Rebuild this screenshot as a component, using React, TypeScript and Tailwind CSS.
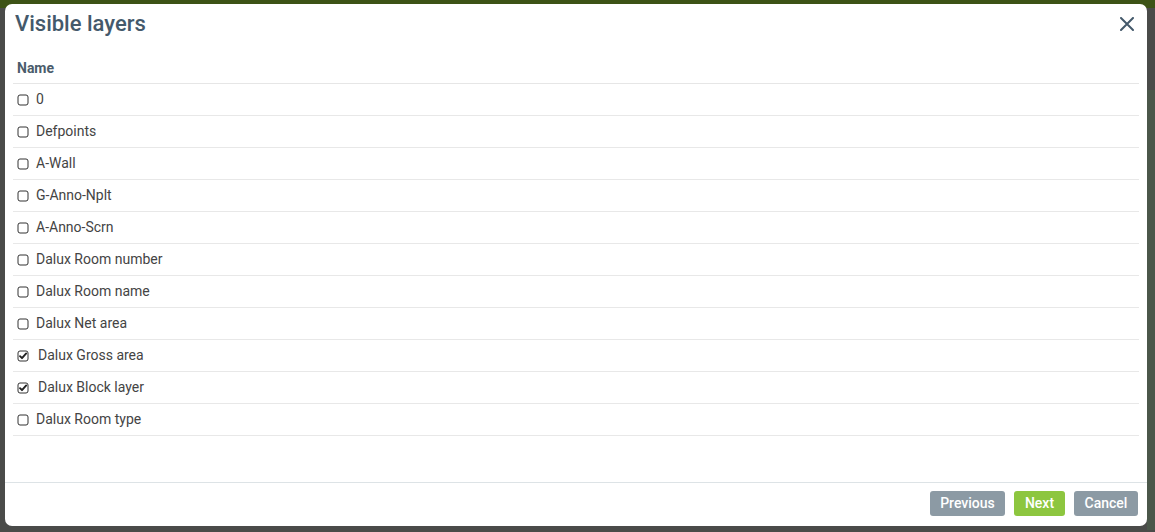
import React from "react";

const layers = [
  { name: "0", checked: false },
  { name: "Defpoints", checked: false },
  { name: "A-Wall", checked: false },
  { name: "G-Anno-Nplt", checked: false },
  { name: "A-Anno-Scrn", checked: false },
  { name: "Dalux Room number", checked: false },
  { name: "Dalux Room name", checked: false },
  { name: "Dalux Net area", checked: false },
  { name: "Dalux Gross area", checked: true },
  { name: "Dalux Block layer", checked: true },
  { name: "Dalux Room type", checked: false },
];

function Box({ checked }: { checked: boolean }) {
  return (
    <svg width="12" height="12" viewBox="0 0 12 12" className="shrink-0">
      <rect x="1" y="1" width="10" height="10" rx="2" fill="#fff" stroke="#333" strokeWidth="1" />
      {checked && (
        <path d="M3 6.2 L5 8.2 L9.2 3.4" fill="none" stroke="#222" strokeWidth="1.9" strokeLinecap="round" strokeLinejoin="round" />
      )}
    </svg>
  );
}

export default function App() {
  return (
    <div
      className="relative w-full h-[532px] overflow-hidden bg-[#4a4b49]"
      style={{ fontFamily: "Roboto, 'Liberation Sans', sans-serif" }}
    >
      <div className="absolute left-0 top-0 w-full h-[8px] bg-[#3d5316]" />
      <div className="absolute right-0 top-[90px] w-[8px] h-[440px] bg-[#4b574a]" />
      <div className="relative ml-[5px] mt-[4px] w-[1142px] h-[522px] bg-white rounded-[7px] flex flex-col">
        <div className="flex items-start justify-between pl-[10px] pr-[13px] pt-[7px] h-[50px]">
          <div className="text-[22px] leading-[26px] text-[#44596b] font-medium">Visible layers</div>
          <svg width="14" height="14" viewBox="0 0 14 14" className="mt-[6px]">
            <path d="M1 1 L13 13 M13 1 L1 13" stroke="#44596b" strokeWidth="2" strokeLinecap="round" />
          </svg>
        </div>
        <div className="flex-1 px-[8px]">
          <div className="border-b border-[#e6e6e6] h-[30px] flex items-center pl-[4px] text-[14px] font-bold text-[#4b5c6b]">
            Name
          </div>
          {layers.map((l) => (
            <div key={l.name} className="border-b border-[#e8e8e8] h-[32px] flex items-center pl-[4px] text-[14px] text-[#444]">
              <Box checked={l.checked} />
              <span className={l.checked ? "ml-[9px]" : "ml-[7px]"}>{l.name}</span>
            </div>
          ))}
        </div>
        <div className="border-t border-[#dde3e6] flex justify-end gap-[9px] pt-[8px] pb-[10px] pr-[9px]">
          <button className="h-[25px] w-[75px] rounded-[3px] bg-[#8c9aa4] text-white text-[14px] font-medium">Previous</button>
          <button className="h-[25px] w-[51px] rounded-[3px] bg-[#8dc63f] text-white text-[14px] font-medium">Next</button>
          <button className="h-[25px] w-[64px] rounded-[3px] bg-[#8c9aa4] text-white text-[14px] font-medium">Cancel</button>
        </div>
      </div>
    </div>
  );
}
